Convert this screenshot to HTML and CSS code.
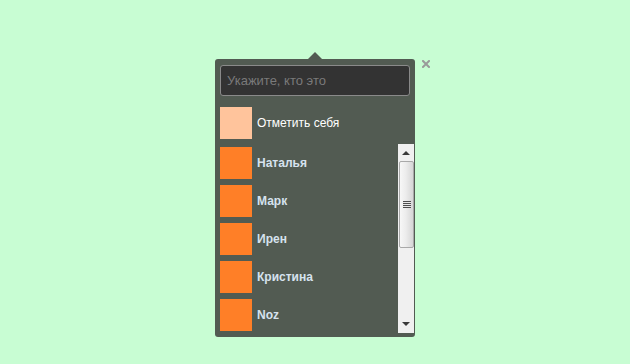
FILE: index.html
```html
<!DOCTYPE html>
<html lang="ru">
<head>
<meta charset="utf-8">
<title>Tag</title>
<link rel="stylesheet" href="styles.css">
</head>
<body>
<div class="wrap">
  <div class="popup">
    <div class="arrow"></div>
    <div class="panel">
      <input class="search" type="text" placeholder="Укажите, кто это">
      <div class="row self">
        <span class="swatch swatch-light"></span>
        <span class="label">Отметить себя</span>
      </div>
      <div class="list">
        <div class="items">
          <div class="row"><span class="swatch"></span><span class="name">Наталья</span></div>
          <div class="row"><span class="swatch"></span><span class="name">Марк</span></div>
          <div class="row"><span class="swatch"></span><span class="name">Ирен</span></div>
          <div class="row"><span class="swatch"></span><span class="name">Кристина</span></div>
          <div class="row"><span class="swatch"></span><span class="name">Noz</span></div>
        </div>
        <div class="scrollbar">
          <div class="sb-btn"><span class="tri-up"></span></div>
          <div class="sb-track">
            <div class="thumb"><span class="grip"></span></div>
          </div>
          <div class="sb-btn"><span class="tri-down"></span></div>
        </div>
      </div>
    </div>
  </div>
  <div class="close">
    <svg width="8" height="8" viewBox="0 0 8 8"><path d="M1 1L7 7M7 1L1 7" stroke="#9a9a9a" stroke-width="2" stroke-linecap="square"/></svg>
  </div>
</div>
</body>
</html>
```
FILE: styles.css
```css
html, body {
  margin: 0;
  background: #c8fdd3;
  font-family: "Liberation Sans", Arial, sans-serif;
}
body {
  padding: 52px 0 0 215px;
}
.wrap {
  display: flex;
  align-items: flex-start;
}
.popup {
  display: flex;
  flex-direction: column;
  align-items: center;
  width: 200px;
}
.arrow {
  width: 0;
  height: 0;
  border-left: 7px solid transparent;
  border-right: 7px solid transparent;
  border-bottom: 7px solid #525b52;
}
.panel {
  width: 200px;
  box-sizing: border-box;
  background: #525b52;
  border-radius: 3px;
  padding: 6px 1px 4px 5px;
  display: flex;
  flex-direction: column;
}
.search {
  display: block;
  height: 31px;
  margin: 0 4px 0 0;
  box-sizing: border-box;
  background: #333333;
  border: 1px solid #8a8a8a;
  border-radius: 3px;
  padding: 0 6px;
  color: #ddd;
  font-family: "Liberation Sans", Arial, sans-serif;
  font-size: 13px;
  outline: none;
}
.search::placeholder {
  color: #7a7a7a;
}
.row {
  display: flex;
  align-items: center;
  height: 38px;
  box-sizing: border-box;
  padding: 3px 0;
  gap: 5px;
  flex-shrink: 0;
}
.self {
  margin-top: 8px;
}
.swatch {
  width: 32px;
  height: 32px;
  background: #ff7f27;
  flex-shrink: 0;
}
.swatch-light {
  background: #ffc49c;
}
.label {
  color: #ffffff;
  font-size: 12px;
}
.name {
  color: #d6e2ee;
  font-size: 12px;
  font-weight: bold;
}
.list {
  display: flex;
  margin-top: 2px;
  height: 189px;
}
.items {
  flex: 1;
  overflow: hidden;
}
.scrollbar {
  width: 16px;
  background: #f0f0f0;
  display: flex;
  flex-direction: column;
}
.sb-btn {
  height: 16px;
  display: flex;
  align-items: center;
  justify-content: center;
  flex-shrink: 0;
}
.tri-up {
  width: 0; height: 0;
  border-left: 4px solid transparent;
  border-right: 4px solid transparent;
  border-bottom: 4px solid #3a3a3a;
  margin-top: 2px;
}
.tri-down {
  width: 0; height: 0;
  border-left: 4px solid transparent;
  border-right: 4px solid transparent;
  border-top: 4px solid #3a3a3a;
  margin-bottom: 2px;
}
.sb-track {
  flex: 1;
  padding-top: 1px;
}
.thumb {
  height: 87px;
  box-sizing: border-box;
  margin: 0 0 0 1px;
  border: 1px solid #a9a9a9;
  border-radius: 2px;
  background: linear-gradient(to right, #f7f7f7 0%, #ececec 45%, #d6d6d6 100%);
  display: flex;
  align-items: center;
  justify-content: center;
}
.grip {
  width: 8px;
  height: 7px;
  background: repeating-linear-gradient(to bottom, #4e4e4e 0 1px, #e8e8e8 1px 2px);
}
.close {
  margin: 8px 0 0 7px;
  width: 8px;
  height: 8px;
  display: flex;
}
```
